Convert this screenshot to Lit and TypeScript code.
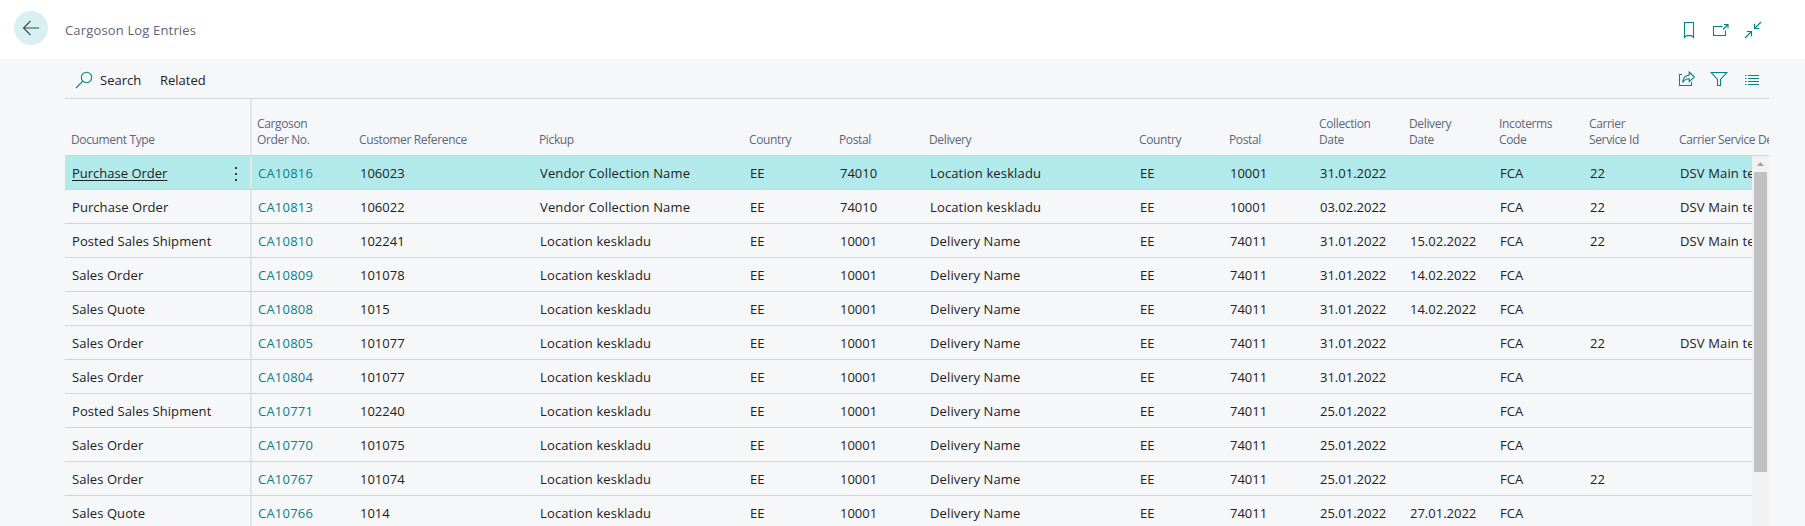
import { LitElement, html, css, svg, nothing } from "lit";
import { customElement, property } from "lit/decorators.js";
import { classMap } from "lit/directives/class-map.js";

interface Entry {
  type: string;
  order: string;
  ref: string;
  outbound?: boolean;
  collection: string;
  delivered?: string;
  service?: boolean;
}

const ENTRIES: Entry[] = [
  { type: "Purchase Order", order: "CA10816", ref: "106023", collection: "31.01.2022", service: true },
  { type: "Purchase Order", order: "CA10813", ref: "106022", collection: "03.02.2022", service: true },
  { type: "Posted Sales Shipment", order: "CA10810", ref: "102241", outbound: true, collection: "31.01.2022", delivered: "15.02.2022", service: true },
  { type: "Sales Order", order: "CA10809", ref: "101078", outbound: true, collection: "31.01.2022", delivered: "14.02.2022" },
  { type: "Sales Quote", order: "CA10808", ref: "1015", outbound: true, collection: "31.01.2022", delivered: "14.02.2022" },
  { type: "Sales Order", order: "CA10805", ref: "101077", outbound: true, collection: "31.01.2022", service: true },
  { type: "Sales Order", order: "CA10804", ref: "101077", outbound: true, collection: "31.01.2022" },
  { type: "Posted Sales Shipment", order: "CA10771", ref: "102240", outbound: true, collection: "25.01.2022" },
  { type: "Sales Order", order: "CA10770", ref: "101075", outbound: true, collection: "25.01.2022" },
  { type: "Sales Order", order: "CA10767", ref: "101074", outbound: true, collection: "25.01.2022" },
  { type: "Sales Quote", order: "CA10766", ref: "1014", outbound: true, collection: "25.01.2022", delivered: "27.01.2022" },
];

const HEADERS = [
  "Document Type", "Cargoson\nOrder No.", "Customer Reference", "Pickup", "Country", "Postal", "Delivery",
  "Country", "Postal", "Collection\nDate", "Delivery\nDate", "Incoterms\nCode", "Carrier\nService Id", "Carrier Service Description",
];

function cellsOf(e: Entry): string[] {
  const id = e.service || e.ref === "101074" ? "22" : "";
  return [
    e.order, e.ref,
    e.outbound ? "Location keskladu" : "Vendor Collection Name",
    "EE", e.outbound ? "10001" : "74010",
    e.outbound ? "Delivery Name" : "Location keskladu",
    "EE", e.outbound ? "74011" : "10001",
    e.collection, e.delivered ?? "", "FCA", id,
    e.service ? "DSV Main terminal" : "",
  ];
}

const ICONS: Record<string, unknown> = {
  back: svg`<path d="M1.5 9H17M8.5 2L1.5 9L8.5 16" />`,
  search: svg`<circle cx="11.5" cy="6.5" r="5.2" /><path d="M7.8 10.2L1 17" />`,
  bookmark: svg`<path d="M4.5 1.5H13.5V16.5L11.3 14.6H6.7L4.5 16.5Z" />`,
  popout: svg`<path d="M10.5 5.5H1.5V14.5H13.5V9.5M11 8.5L16 3.5M12 3.5H16V7.5" />`,
  collapse: svg`<path d="M17 1L10.5 7.5M10.5 2.8V7.5H15.2M1 17L7.5 10.5M2.8 10.5H7.5V15.2" />`,
  share: svg`<path d="M4 4.5H1.5V15.5H13.5V12M4.6 12.4C5 8 7.2 5.4 11.2 5.2V2L16.4 7L11.2 11.6V8.8C8.2 8.6 6.3 9.8 4.6 12.4Z" />`,
  filter: svg`<path d="M1.2 2.5H16.8L10.5 9.4V15.5H7.5V9.4Z" />`,
  list: svg`<path d="M2 5.5H3.5M2 8.5H3.5M2 11.5H3.5M2 14.5H3.5M5 5.5H16M5 8.5H16M5 11.5H16M5 14.5H16" />`,
};

@customElement("line-icon")
class LineIcon extends LitElement {
  @property() name = "";
  static styles = css`
    :host { display: block; width: 18px; height: 18px; }
    svg { display: block; fill: none; stroke: currentColor; stroke-width: 1.1; }
  `;
  render() {
    return html`<svg width="18" height="18" viewBox="0 0 18 18">${ICONS[this.name]}</svg>`;
  }
}

@customElement("log-table")
class LogTable extends LitElement {
  static styles = css`
    :host { display: block; height: 427px; overflow: hidden; }
    .line {
      display: grid;
      grid-template-columns: 185px 2px 102px 180px 210px 90px 90px 210px 90px 90px 90px 90px 90px 90px 95px;
      box-sizing: border-box;
      border-bottom: 1px solid #d2d4d8;
      overflow: hidden;
    }
    .head { height: 57px; align-items: end; color: #5d6679; font-size: 12px; letter-spacing: -0.36px; line-height: 16px; }
    .label { padding: 0 0 7px 5px; white-space: pre; }
    .label.first { padding-left: 6px; }
    .bar { align-self: stretch; background: #e3e5e8; }
    .body { display: flex; height: 370px; overflow: hidden; }
    .rows { width: 1687px; flex: none; }
    .row { height: 34px; line-height: 35px; font-size: 13px; color: #212121; }
    .selected { background: #b2eaec; }
    .cell { padding-left: 6px; white-space: pre; }
    .cell.order { color: #0a8086; letter-spacing: 0.22px; }
    .cell.words { letter-spacing: 0.14px; }
    .type { display: flex; justify-content: space-between; padding: 0 13px 0 7px; white-space: pre; }
    .name { letter-spacing: 0.07px; }
    .selected .name { letter-spacing: 0; text-decoration: underline; text-underline-offset: 2px; }
    .dots { display: flex; flex-direction: column; justify-content: center; gap: 4px; height: 35px; }
    .dot { width: 2px; height: 2px; background: #333b3c; }
    .track { width: 17px; background: #f1f1f1; display: flex; flex-direction: column; align-items: center; }
    .arrow { height: 16px; width: 17px; display: block; }
    .thumb { width: 13px; height: 300px; background: #c1c1c1; }
  `;
  render() {
    return html`
      <div class="line head">
        ${HEADERS.map((h, i) => html`
          <div class=${classMap({ label: true, first: i === 0 })}>${h}</div>
          ${i === 0 ? html`<div class="bar"></div>` : nothing}`)}
      </div>
      <div class="body">
        <div class="rows">
          ${ENTRIES.map((e, i) => html`
            <div class=${classMap({ line: true, row: true, selected: i === 0 })}>
              <div class="type">
                <span class="name">${e.type}</span>
                ${i === 0 ? html`<span class="dots"><i class="dot"></i><i class="dot"></i><i class="dot"></i></span>` : nothing}
              </div>
              <div class="bar"></div>
              ${cellsOf(e).map((c, j) => html`<div class=${classMap({ cell: true, order: j === 0, words: j === 2 || j === 5 || j === 12 })}>${c}</div>`)}
            </div>`)}
        </div>
        <div class="track">
          <svg class="arrow" viewBox="0 1 17 16"><path d="M5 11L8.5 7L12 11Z" fill="#a3a3a3" /></svg>
          <div class="thumb"></div>
        </div>
      </div>`;
  }
}

@customElement("app-root")
class AppRoot extends LitElement {
  static styles = css`
    :host {
      display: block; height: 526px; overflow: hidden; background: #f6f7f9;
      font-family: "Open Sans", "Noto Sans", sans-serif;
    }
    .top { display: flex; height: 59px; background: #fff; box-sizing: border-box; padding: 11px 43px 0 14px; }
    .back {
      display: grid; place-items: center; width: 34px; height: 34px; border-radius: 50%;
      background: #d9f0f2; color: #3f4a4c;
    }
    .title { margin-left: 17px; font-size: 13px; letter-spacing: 0.16px; line-height: 38px; color: #5d6679; flex: 1; }
    .icons { display: flex; gap: 14px; color: #00838a; }
    .top .icons { padding-top: 10px; }
    .main { width: 1704px; margin-left: 65px; }
    .bar {
      display: flex; height: 40px; box-sizing: border-box; border-bottom: 1px solid #d2d4d8;
      padding: 0 8px 0 10px; color: #212121; font-size: 13px; line-height: 42px;
    }
    .find { padding-top: 12px; color: #00838a; }
    .search { margin-left: 7px; width: 60px; }
    .related { flex: 1; }
    .bar .icons { padding-top: 11px; gap: 15px; }
    .bar .icons line-icon:first-child { margin-right: -1px; }
  `;
  render() {
    return html`
      <div class="top">
        <div class="back"><line-icon name="back"></line-icon></div>
        <div class="title">Cargoson Log Entries</div>
        <div class="icons">
          <line-icon name="bookmark"></line-icon>
          <line-icon name="popout"></line-icon>
          <line-icon name="collapse"></line-icon>
        </div>
      </div>
      <div class="main">
        <div class="bar">
          <line-icon class="find" name="search"></line-icon>
          <span class="search">Search</span>
          <span class="related">Related</span>
          <div class="icons">
            <line-icon name="share"></line-icon>
            <line-icon name="filter"></line-icon>
            <line-icon name="list"></line-icon>
          </div>
        </div>
        <log-table></log-table>
      </div>`;
  }
}
